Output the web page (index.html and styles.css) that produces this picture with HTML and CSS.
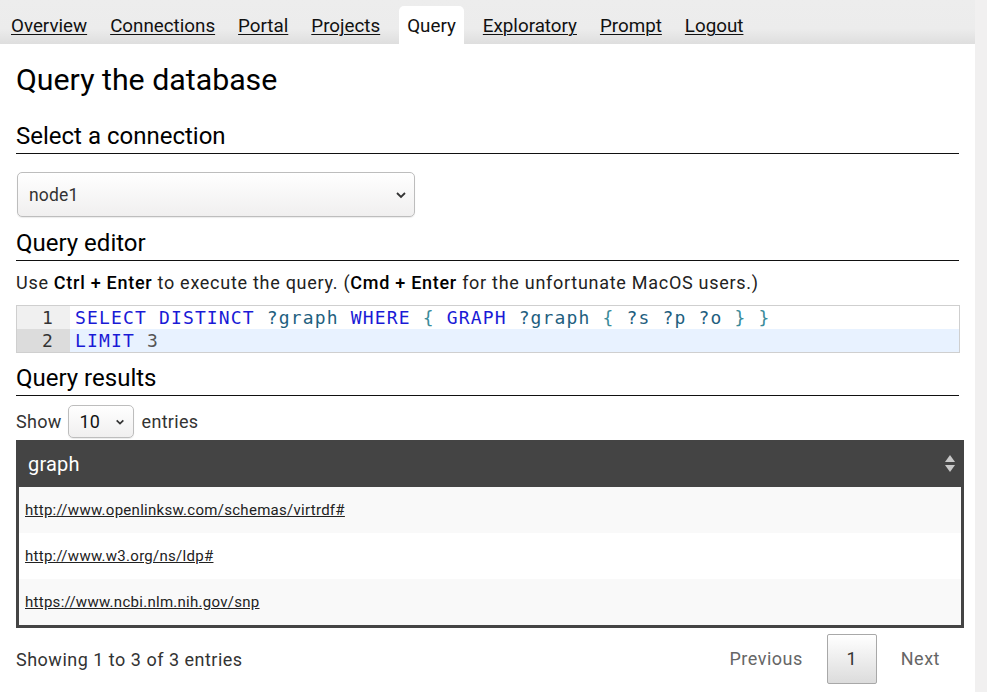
FILE: index.html
```html
<!DOCTYPE html>
<html lang="en">
<head>
<meta charset="utf-8">
<title>Query the database</title>
<link rel="stylesheet" href="styles.css">
</head>
<body>
<div class="page">
  <nav class="nav">
    <a class="tab" href="#">Overview</a>
    <a class="tab" href="#">Connections</a>
    <a class="tab" href="#">Portal</a>
    <a class="tab" href="#">Projects</a>
    <span class="tab active">Query</span>
    <a class="tab" href="#">Exploratory</a>
    <a class="tab" href="#">Prompt</a>
    <a class="tab" href="#">Logout</a>
  </nav>
  <main class="content">
    <h1 class="title">Query the database</h1>
    <h2 class="section">Select a connection</h2>
    <div class="select-wrap conn">
      <select class="select"><option>node1</option></select>
      <svg class="chev" width="12" height="8" viewBox="0 0 12 8"><path d="M2 2 L6 6 L10 2" fill="none" stroke="#333" stroke-width="1.8"/></svg>
    </div>
    <h2 class="section">Query editor</h2>
    <p class="hint">Use <b>Ctrl + Enter</b> to execute the query. (<b>Cmd + Enter</b> for the unfortunate MacOS users.)</p>
    <div class="editor">
      <div class="line"><span class="num">1</span><span class="code"><span class="kw">SELECT</span> <span class="kw">DISTINCT</span> <span class="var">?graph</span> <span class="kw">WHERE</span> <span class="br">{</span> <span class="kw">GRAPH</span> <span class="var">?graph</span> <span class="br">{</span> <span class="var">?s</span> <span class="var">?p</span> <span class="var">?o</span> <span class="br">}</span> <span class="br">}</span></span></div>
      <div class="line current"><span class="num">2</span><span class="code"><span class="kw">LIMIT</span> <span class="n">3</span></span></div>
    </div>
    <h2 class="section">Query results</h2>
    <div class="length">
      <span>Show</span>
      <div class="select-wrap small">
        <select class="select"><option>10</option></select>
        <svg class="chev" width="10" height="7" viewBox="0 0 12 8"><path d="M2 2 L6 6 L10 2" fill="none" stroke="#333" stroke-width="2"/></svg>
      </div>
      <span>entries</span>
    </div>
    <div class="table">
      <div class="thead">
        <span>graph</span>
        <svg class="sort" width="12" height="19" viewBox="0 0 12 19"><path d="M6 1 L11 8 L1 8 Z" fill="#c8c8c8"/><path d="M1 11 L11 11 L6 18 Z" fill="#c8c8c8"/></svg>
      </div>
      <div class="row odd"><a href="#">http://www.openlinksw.com/schemas/virtrdf#</a></div>
      <div class="row"><a href="#">http://www.w3.org/ns/ldp#</a></div>
      <div class="row odd"><a href="#">https://www.ncbi.nlm.nih.gov/snp</a></div>
    </div>
    <div class="footer">
      <span class="info">Showing 1 to 3 of 3 entries</span>
      <div class="paging">
        <span class="pbtn">Previous</span>
        <span class="pbtn cur">1</span>
        <span class="pbtn">Next</span>
      </div>
    </div>
  </main>
</div>
<div class="gutter"></div>
</body>
</html>
```
FILE: styles.css
```css
html, body {
  margin: 0;
  padding: 0;
}
body {
  display: flex;
  min-height: 100vh;
  font-family: Roboto, "Liberation Sans", sans-serif;
  color: #000;
  background: #fff;
  overflow: hidden;
}
.page {
  flex: 1;
  min-width: 0;
}
.gutter {
  width: 12px;
  background: #f1f0f0;
}
.nav {
  height: 44px;
  display: flex;
  align-items: flex-end;
  gap: 7px;
  padding-left: 3px;
  background: linear-gradient(#ededed 0%, #ececec 65%, #dedede 100%);
}
.tab {
  height: 38px;
  line-height: 40px;
  padding: 0 8px;
  font-size: 18.8px;
  color: #111;
  text-decoration: underline;
  text-underline-offset: 2px;
  text-decoration-thickness: 1px;
}
.tab.active {
  margin: 0 4px;
  background: #fff;
  text-decoration: none;
  border-radius: 5px 5px 0 0;
}
.content {
  padding: 0 16px;
}
.title {
  margin: 18px 0 0;
  font-size: 30.3px;
  line-height: 36px;
  font-weight: 400;
}
.section {
  margin: 0;
  font-size: 24px;
  line-height: 28px;
  font-weight: 400;
  padding-bottom: 3px;
  border-bottom: 1px solid #111;
}
.title + .section {
  margin-top: 24px;
}
.select-wrap {
  position: relative;
  display: inline-block;
}
.select {
  appearance: none;
  -webkit-appearance: none;
  font-family: Roboto, "Liberation Sans", sans-serif;
  color: #333;
  border: 1px solid #bdbdbd;
  border-radius: 5px;
  background: linear-gradient(#fff, #f0efef);
  box-shadow: 0 1px 1px rgba(0,0,0,0.08);
  margin: 0;
  outline: none;
}
.chev {
  position: absolute;
  top: 50%;
  transform: translateY(-50%);
  pointer-events: none;
}
.conn {
  display: block;
  width: 398px;
  margin: 18px 0 12px 1px;
}
.conn .select {
  width: 398px;
  height: 45px;
  padding: 0 11px;
  font-size: 17.5px;
  letter-spacing: 0.2px;
}
.conn .chev {
  right: 8px;
}
.hint {
  margin: 11px 0;
  font-size: 18px;
  line-height: 22px;
  letter-spacing: 0.72px;
  color: #222;
}
.hint b {
  font-weight: 500;
  color: #000;
}
.editor {
  border: 1px solid #cfcfcf;
  margin-right: -1px;
  margin-bottom: 11px;
  font-family: "DejaVu Sans Mono", monospace;
  font-size: 18px;
  letter-spacing: 1.15px;
}
.line {
  display: flex;
  height: 23px;
  line-height: 23px;
}
.num {
  width: 53px;
  flex: none;
  box-sizing: border-box;
  padding-right: 16px;
  text-align: right;
  background: #f0f0f0;
  color: #333;
}
.code {
  flex: 1;
  padding-left: 5px;
  white-space: pre;
  color: #333;
}
.current .num {
  background: #dcdcdc;
}
.current .code {
  background: #e8f2ff;
}
.kw { color: #1a1ad6; }
.var { color: #1f5f7f; }
.br { color: #3b8b9a; }
.n { color: #555; }
.length {
  display: flex;
  align-items: center;
  gap: 6px;
  margin-top: 9px;
  font-size: 18px;
  letter-spacing: 0.3px;
  color: #333;
}
.length > span:last-child {
  margin-left: 2px;
}
.small .select {
  width: 66px;
  height: 33px;
  padding: 0 11px;
  font-size: 18px;
  color: #111;
}
.small .chev {
  right: 9px;
}
.table {
  margin-top: 2px;
  margin-right: -5px;
  border: 3px solid #444;
  border-top: 0;
}
.thead {
  display: flex;
  align-items: center;
  justify-content: space-between;
  height: 47px;
  margin: 0 -3px;
  padding: 0 8px 0 12px;
  background: #444;
  color: #fff;
  font-size: 20px;
  letter-spacing: 0.2px;
}
.row {
  height: 46px;
  display: flex;
  align-items: center;
  padding-left: 6px;
  background: #fff;
  font-size: 15px;
  letter-spacing: 0.28px;
}
.row.odd {
  background: #f9f9f9;
}
.row a {
  color: #222;
  text-decoration: underline;
  text-underline-offset: 1px;
}
.footer {
  display: flex;
  align-items: center;
  justify-content: space-between;
  margin-top: 6px;
  margin-right: -5px;
}
.info {
  font-size: 18px;
  letter-spacing: 0.5px;
  color: #333;
}
.paging {
  display: flex;
  align-items: center;
}
.pbtn {
  padding: 0 24px;
  font-size: 18px;
  letter-spacing: 0.5px;
  color: #666;
  line-height: 50px;
}
.pbtn.cur {
  box-sizing: border-box;
  width: 50px;
  height: 50px;
  padding: 0;
  text-align: center;
  border: 1px solid #a8a8a8;
  border-radius: 2px;
  background: linear-gradient(#fff, #dcdcdc);
  color: #333;
  line-height: 48px;
}
```
